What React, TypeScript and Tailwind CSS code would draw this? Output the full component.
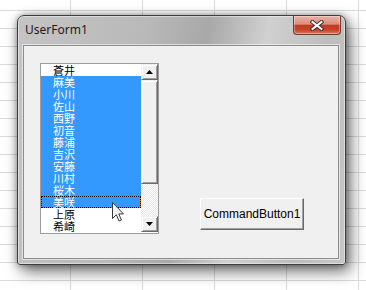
import React from "react";

const items = ["蒼井", "麻美", "小川", "佐山", "西野", "初音", "藤浦", "吉沢", "安藤", "川村", "桜木", "美咲", "上原", "希崎"];

function Tri({ down }: { down?: boolean }) {
  return (
    <svg width="7" height="4" viewBox="0 0 7 4">
      {down ? <polygon points="0,0 7,0 3.5,4" fill="#000" /> : <polygon points="0,4 7,4 3.5,0" fill="#000" />}
    </svg>
  );
}

const raised =
  "border border-t-[#f0f0f0] border-l-[#f0f0f0] border-r-[#696969] border-b-[#696969] shadow-[inset_1px_1px_0_#ffffff,inset_-1px_-1px_0_#a0a0a0] bg-[#f0f0f0]";

export default function App() {
  return (
    <div className="relative w-[366px] h-[290px] overflow-hidden bg-white bg-[linear-gradient(to_right,#dadada_1px,transparent_1px),linear-gradient(to_bottom,#dadada_1px,transparent_1px)] [background-size:72px_18px] [background-position:70px_10px] pl-[17px] pt-[15px]">
      <div className="w-[329px] h-[250px] flex flex-col border border-[#3e3e3e] rounded-t-[7px] rounded-b-[3px] bg-[linear-gradient(100deg,#c4c4c4_0%,#b9b9b9_35%,#a8a8a8_52%,#d0d0d0_68%,#bdbdbd_85%,#c6c6c6_100%)] shadow-[4px_6px_16px_rgba(0,0,0,0.6),0_0_6px_rgba(0,0,0,0.35),inset_0_0_0_1px_rgba(255,255,255,0.45)]">
        <div className="h-[29px] flex items-start">
          <div className="pl-[7px] pt-[6px] text-[12px] leading-[16px] text-[#1b1b1b] [font-family:'Noto_Sans',sans-serif]">UserForm1</div>
          <div className="ml-auto mr-[4px] w-[48px] h-[19px] rounded-b-[4px] border-x border-b border-[#6a3a34] bg-[linear-gradient(to_bottom,#ebb3a6_0%,#db8e7e_45%,#c4391f_52%,#c8432a_78%,#dd7b5d_100%)] shadow-[inset_0_0_0_1px_rgba(255,255,255,0.35)] flex items-center justify-center">
            <svg width="14" height="11" viewBox="0 0 14 11">
              <path d="M2.5 2 L11.5 9 M11.5 2 L2.5 9" stroke="#3b2a2a" strokeWidth="4" strokeLinecap="square" />
              <path d="M2.5 2 L11.5 9 M11.5 2 L2.5 9" stroke="#ffffff" strokeWidth="2" strokeLinecap="square" />
            </svg>
          </div>
        </div>
        <div className="ml-[5px] w-[316px] h-[214px] border border-[#8c8c8c] bg-[#f0f0f0] shadow-[0_0_0_1px_rgba(255,255,255,0.55)] flex items-start pl-[16px] pt-[17px]">
          <div className="w-[119px] h-[171px] border border-[#9c9c9c] bg-white flex">
            <div className="w-[100px] flex flex-col [font-family:'MS_UI_Gothic','Noto_Sans_CJK_JP',sans-serif] text-[11px] leading-[12px]">
              {items.map((t, i) => {
                const sel = i >= 1 && i <= 11;
                if (i === 11) {
                  return (
                    <div key={t} className="h-[12px] border border-dotted border-black bg-[#e07a10]">
                      <div className="h-[10px] bg-[#3399ff] text-white pl-[11px] leading-[10px] whitespace-nowrap">
                        {t}
                      </div>
                    </div>
                  );
                }
                return (
                  <div key={t} className={`h-[12px] pl-[12px] whitespace-nowrap ${sel ? "bg-[#3399ff] text-white" : "text-black"}`}>
                    {t}
                  </div>
                );
              })}
            </div>
            <div className="w-[17px] flex flex-col">
              <div className={`h-[16px] ${raised} flex items-center justify-center`}>
                <Tri />
              </div>
              <div className={`h-[104px] ${raised}`} />
              <div className="h-[32px] bg-[conic-gradient(#ffffff_25%,#e6e6e6_0_50%,#ffffff_0_75%,#e6e6e6_0)] [background-size:2px_2px]" />
              <div className={`h-[16px] ${raised} flex items-center justify-center`}>
                <Tri down />
              </div>
            </div>
          </div>
          <div className="ml-[41px] mt-[135px] w-[104px] h-[32px] border border-t-[#ffffff] border-l-[#ffffff] border-r-[#696969] border-b-[#696969] shadow-[inset_-1px_-1px_0_#a0a0a0] bg-[#f0f0f0] flex items-center justify-center text-[12px] text-black [font-family:'Liberation_Sans',Arial,sans-serif]">
            CommandButton1
          </div>
        </div>
      </div>
      <svg className="absolute left-[112px] top-[202px]" width="13" height="21" viewBox="0 0 13 21">
        <path d="M0.5 0.5 L0.5 16.5 L4.3 12.8 L7 19 L9.4 18 L6.8 11.9 L11.5 11.9 Z" fill="#f4f4f4" stroke="#3a3a3a" strokeWidth="1" strokeLinejoin="miter" />
      </svg>
    </div>
  );
}
